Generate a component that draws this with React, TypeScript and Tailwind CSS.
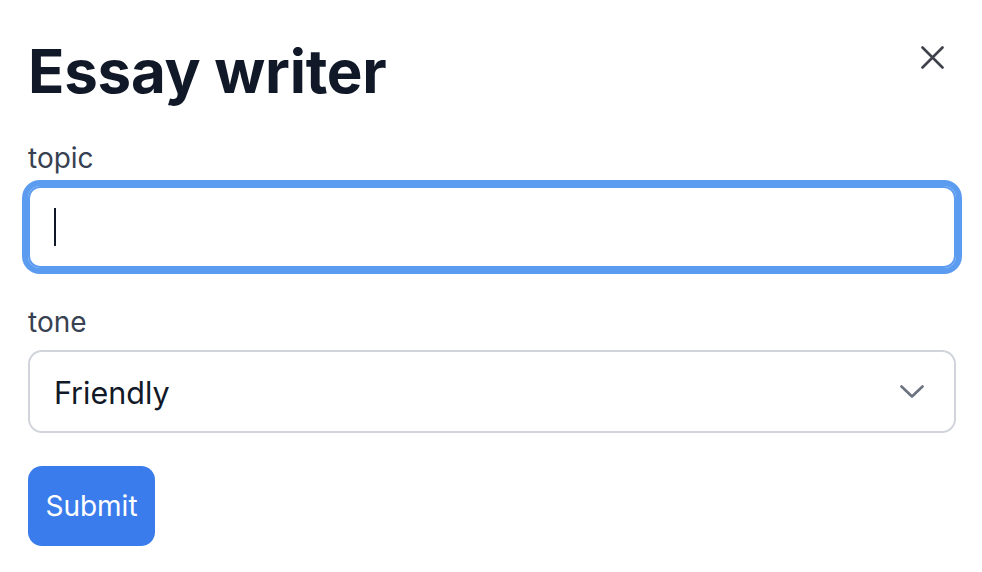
import React from "react";

function CloseIcon() {
  return (
    <svg width="23" height="23" viewBox="0 0 23 23" fill="none" stroke="#3f424a" strokeWidth="2.6" strokeLinecap="round">
      <path d="M1.5 1.5 L21.5 21.5 M21.5 1.5 L1.5 21.5" />
    </svg>
  );
}

function ChevronIcon() {
  return (
    <svg width="24" height="13" viewBox="0 0 24 13" fill="none" stroke="#6b7280" strokeWidth="2.6" strokeLinecap="round" strokeLinejoin="round">
      <path d="M1.5 1.5 L12 11.5 L22.5 1.5" />
    </svg>
  );
}

export default function App() {
  return (
    <div className="w-[982px] h-[572px] bg-white font-['Inter',sans-serif] overflow-hidden">
      <div className="pl-[28px] pr-[26px] pt-[35px]">
        {/* Header */}
        <div className="flex items-start justify-between">
          <h1 className="text-[60px] leading-[72px] font-bold text-[#111827] tracking-[-0.25px]">Essay writer</h1>
          <button className="mt-[11px] mr-[12px] flex items-center justify-center">
            <CloseIcon />
          </button>
        </div>

        {/* topic */}
        <div className="mt-[31px]">
          <label className="block text-[28px] leading-[40px] text-[#374151]">topic</label>
          <div className="mt-[8px] h-[82px] rounded-[12px] border-2 border-[#5b9cf0] ring-[6px] ring-[#5b9cf0] flex items-center pl-[24px]">
            <span className="w-[2px] h-[38px] bg-[#111827]"></span>
          </div>
        </div>

        {/* tone */}
        <div className="mt-[34px]">
          <label className="block text-[28px] leading-[40px] text-[#374151]">tone</label>
          <div className="mt-[8px] h-[83px] rounded-[14px] border-2 border-[#d1d5db] flex items-center justify-between pl-[24px] pr-[30px]">
            <span className="text-[30.5px] leading-[40px] pt-[3px] text-[#111827]">Friendly</span>
            <ChevronIcon />
          </div>
        </div>

        {/* submit */}
        <button className="mt-[33px] w-[127px] h-[80px] rounded-[14px] bg-[#3a7ceb] text-white text-[28px] flex items-center justify-center">
          Submit
        </button>
      </div>
    </div>
  );
}
